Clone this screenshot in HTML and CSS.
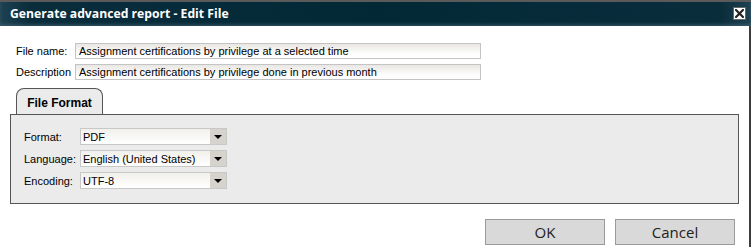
FILE: index.html
```html
<!DOCTYPE html>
<html>
<head>
<meta charset="utf-8">
<link rel="stylesheet" href="styles.css">
</head>
<body>
<div class="window">
  <div class="titlebar">
    <span class="title">Generate advanced report - Edit File</span>
    <span class="close">
      <svg width="9" height="9" viewBox="0 0 9 9"><path d="M1 1L8 8M8 1L1 8" stroke="#222" stroke-width="2.2" stroke-linecap="square"/></svg>
    </span>
  </div>
  <div class="content">
    <div class="fields">
      <label class="lbl">File name:</label>
      <div class="input">Assignment certifications by privilege at a selected time</div>
      <label class="lbl">Description</label>
      <div class="input">Assignment certifications by privilege done in previous month</div>
    </div>
    <div class="tabs"><div class="tab">File Format</div></div>
    <div class="panel">
      <div class="grid">
        <label class="lbl">Format:</label>
        <div class="select"><span class="val">PDF</span><span class="arrow"></span></div>
        <label class="lbl">Language:</label>
        <div class="select"><span class="val">English (United States)</span><span class="arrow"></span></div>
        <label class="lbl">Encoding:</label>
        <div class="select"><span class="val">UTF-8</span><span class="arrow"></span></div>
      </div>
    </div>
    <div class="buttons">
      <button class="btn">OK</button>
      <button class="btn">Cancel</button>
    </div>
  </div>
</div>
</body>
</html>
```
FILE: styles.css
```css
html, body {
  margin: 0;
  padding: 0;
  background: #fff;
}
body {
  width: 751px;
  height: 247px;
  overflow: hidden;
  font-family: "Liberation Sans", Arial, sans-serif;
  font-size: 11px;
  color: #000;
}
.window {
  height: 247px;
  display: flex;
  flex-direction: column;
  box-sizing: border-box;
}
.titlebar {
  height: 26px;
  box-sizing: border-box;
  border-top: 2px solid #5a5a5a;
  background: linear-gradient(90deg, #1f4253 0%, #0a2d3c 4%, #022836 50%, #0a2d3c 96%, #1f4253 100%);
  box-shadow: inset 0 -2px 3px rgba(80,110,125,0.45);
  display: flex;
  align-items: center;
  justify-content: space-between;
  padding: 0 5px 0 10px;
}
.title {
  color: #fff;
  font-family: "Open Sans", sans-serif;
  font-weight: 700;
  font-size: 12.2px;
  margin-top: -1px;
}
.close {
  width: 13px;
  height: 13px;
  box-sizing: border-box;
  background: #fff;
  border: 1px solid #666;
  display: flex;
  align-items: center;
  justify-content: center;
  margin-top: -2px;
}
.content {
  flex: 1;
  border-right: 2px solid #3c3c3c;
  padding: 17px 10px 0 10px;
}
.fields {
  display: grid;
  grid-template-columns: 59px 406px;
  row-gap: 5px;
  padding-left: 6px;
  align-items: center;
}
.lbl {
  white-space: nowrap;
}
.input {
  height: 16px;
  box-sizing: border-box;
  border: 1px solid #c4c4c4;
  background: linear-gradient(#e9e7e3, #fdfdfd 70%, #fff);
  padding: 0 3px;
  line-height: 14px;
  white-space: nowrap;
  overflow: hidden;
}
.tabs {
  margin-top: 8px;
  padding-left: 6px;
  display: flex;
}
.tab {
  width: 87px;
  height: 26px;
  box-sizing: border-box;
  border: 1px solid #555;
  border-bottom: none;
  border-radius: 8px 8px 0 0;
  background: #ebebeb;
  font-weight: 700;
  font-size: 12px;
  display: flex;
  align-items: center;
  justify-content: center;
  padding-top: 2px;
}
.panel {
  height: 90px;
  box-sizing: border-box;
  border: 1px solid #555;
  background: #ebebeb;
  padding: 13px 13px 0 13px;
}
.grid {
  display: grid;
  grid-template-columns: 56px 147px;
  row-gap: 5px;
  align-items: center;
}
.select {
  height: 17px;
  box-sizing: border-box;
  border: 1px solid #c8c8c8;
  background: linear-gradient(#f1f0ec, #fff);
  display: flex;
  align-items: center;
}
.select .val {
  flex: 1;
  padding-left: 2px;
  white-space: nowrap;
  overflow: hidden;
}
.select .arrow {
  width: 16px;
  height: 15px;
  background: #d6d3cc;
  position: relative;
}
.select .arrow::after {
  content: "";
  position: absolute;
  left: 4px;
  top: 6px;
  border-left: 4px solid transparent;
  border-right: 4px solid transparent;
  border-top: 4px solid #000;
}
.buttons {
  display: flex;
  justify-content: flex-end;
  gap: 10px;
  margin-top: 15px;
  padding-right: 4px;
}
.btn {
  width: 120px;
  height: 26px;
  box-sizing: border-box;
  border: 1px solid #9a9a9a;
  background: #d9d9d9;
  font-family: "Open Sans", sans-serif;
  font-size: 15px;
  color: #222;
  padding: 0;
  border-radius: 0;
}
```
